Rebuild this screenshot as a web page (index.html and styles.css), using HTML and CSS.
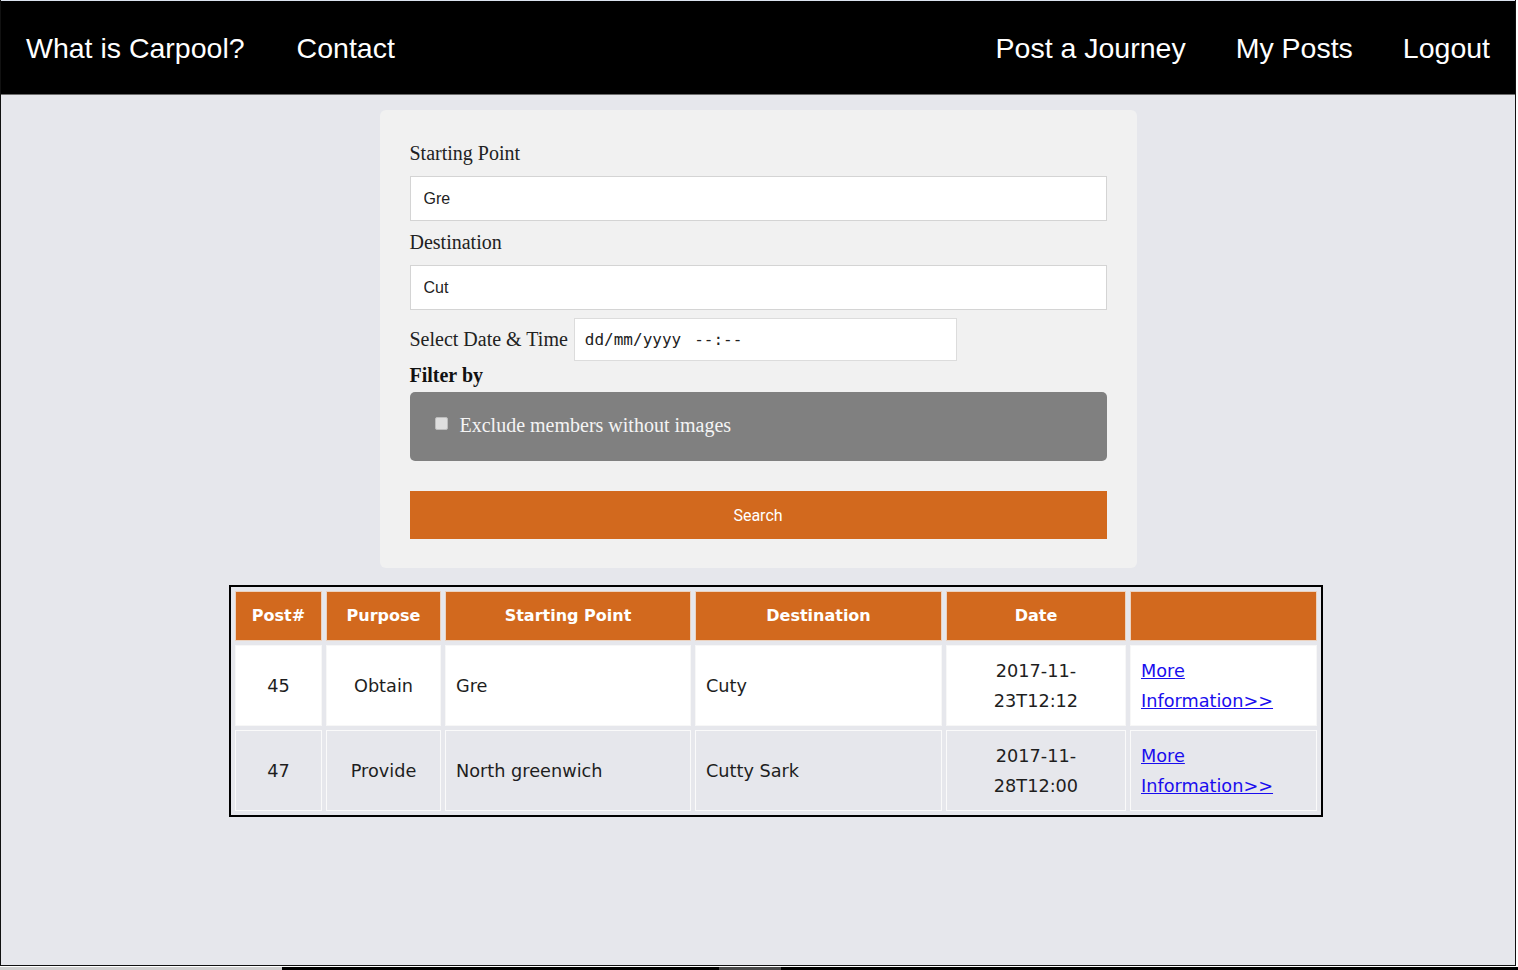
FILE: index.html
```html
<!DOCTYPE html>
<html lang="en">
<head>
<meta charset="utf-8">
<title>Carpool - Search</title>
<link rel="stylesheet" href="styles.css">
</head>
<body>
<div class="screen">
  <div class="topline"></div>
  <nav class="navbar">
    <div class="nav-group">
      <a class="nav-link" href="#">What is Carpool?</a>
      <a class="nav-link" href="#">Contact</a>
    </div>
    <div class="nav-group">
      <a class="nav-link" href="#">Post a Journey</a>
      <a class="nav-link" href="#">My Posts</a>
      <a class="nav-link" href="#">Logout</a>
    </div>
  </nav>
  <main class="content">
    <form class="search-card">
      <label class="field-label">Starting Point</label>
      <input class="text-input" type="text" value="Gre">
      <label class="field-label">Destination</label>
      <input class="text-input" type="text" value="Cut">
      <div class="date-row">
        <label class="date-label">Select Date &amp; Time</label>
        <div class="date-input"><span>dd/mm/yyyy</span><span class="time-part">--:--</span></div>
      </div>
      <div class="filter-title">Filter by</div>
      <div class="filter-box">
        <input class="check" type="checkbox">
        <span class="filter-text">Exclude members without images</span>
      </div>
      <button class="search-btn" type="button">Search</button>
    </form>

    <table class="results">
      <thead>
        <tr>
          <th class="c-post">Post#</th>
          <th class="c-purpose">Purpose</th>
          <th class="c-start">Starting Point</th>
          <th class="c-dest">Destination</th>
          <th class="c-date">Date</th>
          <th class="c-link"></th>
        </tr>
      </thead>
      <tbody>
        <tr class="row-odd">
          <td class="center">45</td>
          <td class="center">Obtain</td>
          <td>Gre</td>
          <td>Cuty</td>
          <td class="center">2017-11-<br>23T12:12</td>
          <td><a class="more" href="#">More<br>Information&gt;&gt;</a></td>
        </tr>
        <tr class="row-even">
          <td class="center">47</td>
          <td class="center">Provide</td>
          <td>North greenwich</td>
          <td>Cutty Sark</td>
          <td class="center">2017-11-<br>28T12:00</td>
          <td><a class="more" href="#">More<br>Information&gt;&gt;</a></td>
        </tr>
      </tbody>
    </table>
  </main>
</div>
<div class="taskbar"><div class="tb-light"></div><div class="tb-dark"><div class="tb-thumb"></div></div></div>
</body>
</html>
```

FILE: styles.css
```css
html, body {
  margin: 0;
  padding: 0;
  background: #ffffff;
}

.screen {
  width: 1516px;
  height: 966px;
  box-sizing: border-box;
  border-left: 1px solid #111;
  border-right: 1px solid #111;
  border-bottom: 1px solid #111;
  background: #e6e7ec;
  overflow: hidden;
}

.topline {
  height: 1px;
  background: #dbe2ee;
}

.navbar {
  height: 93px;
  background: #000;
  border-bottom: 1px solid #6e6e6e;
  display: flex;
  justify-content: space-between;
  align-items: center;
}

.nav-group {
  display: flex;
  align-items: center;
}

.nav-link {
  font-family: "Liberation Sans", Arial, sans-serif;
  font-size: 28.5px;
  color: #fff;
  text-decoration: none;
  padding: 0 25px;
  line-height: 40px;
}

.nav-group:first-child .nav-link + .nav-link {
  margin-left: 2px;
}

.content {
  padding-top: 15px;
}

.search-card {
  width: 757px;
  box-sizing: border-box;
  margin: 0 auto;
  background: #f1f1f1;
  border-radius: 6px;
  padding: 32px 30px 29px 30px;
  display: flex;
  flex-direction: column;
  font-family: "Liberation Serif", "Times New Roman", serif;
  color: #222;
}

.field-label {
  font-size: 20px;
  line-height: 23px;
  margin-bottom: 11px;
}

.text-input {
  height: 45px;
  box-sizing: border-box;
  border: 1px solid #d4d4d4;
  background: #fff;
  padding: 0 13px;
  font-family: "Liberation Sans", Arial, sans-serif;
  font-size: 16px;
  color: #222;
  margin: 0 0 10px 0;
  outline: none;
}

.date-row {
  display: flex;
  align-items: center;
  margin-top: -2px;
  gap: 6px;
}

.date-label {
  font-size: 20px;
  line-height: 23px;
}

.date-input {
  width: 383px;
  height: 43px;
  box-sizing: border-box;
  border: 1px solid #dcdcdc;
  background: #fff;
  display: flex;
  align-items: center;
  padding-left: 10px;
  font-family: "DejaVu Sans Mono", "Liberation Mono", monospace;
  font-size: 16px;
  color: #222;
}

.time-part {
  margin-left: 13px;
}

.filter-title {
  font-size: 20px;
  font-weight: bold;
  line-height: 23px;
  margin-top: 3px;
  margin-bottom: 5px;
  color: #111;
}

.filter-box {
  height: 69px;
  box-sizing: border-box;
  background: #808080;
  border-radius: 5px;
  display: flex;
  align-items: center;
  padding-left: 25px;
  padding-bottom: 2px;
}

.check {
  appearance: none;
  -webkit-appearance: none;
  width: 13px;
  height: 13px;
  margin: 0 12px 4px 0;
  box-sizing: border-box;
  border: 1px solid #bdbdbd;
  border-radius: 2px;
  background: #dedede;
}

.filter-text {
  font-size: 20px;
  color: #f4f4f4;
}

.search-btn {
  margin-top: 30px;
  height: 48px;
  border: none;
  background: #d2691e;
  color: #fff;
  font-family: Roboto, "Liberation Sans", Arial, sans-serif;
  font-size: 16px;
  cursor: pointer;
}

.results {
  margin: 17px 0 0 228px;
  width: 1094px;
  border: 2px solid #000;
  border-spacing: 4px;
  table-layout: fixed;
  font-family: "DejaVu Sans", Verdana, sans-serif;
  font-size: 17.7px;
  color: #1e1e1e;
  background: #e6e7ec;
}

.results th,
.results td {
  border: 1px solid #f7f7f7;
  box-sizing: border-box;
}

.results th {
  background: #d2691e;
  color: #fff;
  font-weight: bold;
  font-size: 16px;
  line-height: 30px;
  padding: 9px 4px;
  text-align: center;
  border-color: #ecd2bf;
}

.results td {
  line-height: 30px;
  padding: 9.5px 10px;
  text-align: left;
}

.results td.center {
  text-align: center;
}

.c-post { width: 87px; }
.c-purpose { width: 115px; }
.c-start { width: 246px; }
.c-dest { width: 247px; }
.c-date { width: 180px; }

.row-odd td {
  background: #fff;
}

.row-even td {
  background: #e6e7ec;
  border-color: #fafafa;
}

.more {
  color: #1a0dee;
  text-decoration: underline;
}

.taskbar {
  margin-top: 1px;
  height: 3px;
  display: flex;
}

.tb-light {
  width: 282px;
  background: #cfcfcf;
}

.tb-dark {
  flex: 1;
  background: #000;
  display: flex;
}

.tb-thumb {
  margin-left: 437px;
  width: 62px;
  background: #4a4a4a;
}
```
